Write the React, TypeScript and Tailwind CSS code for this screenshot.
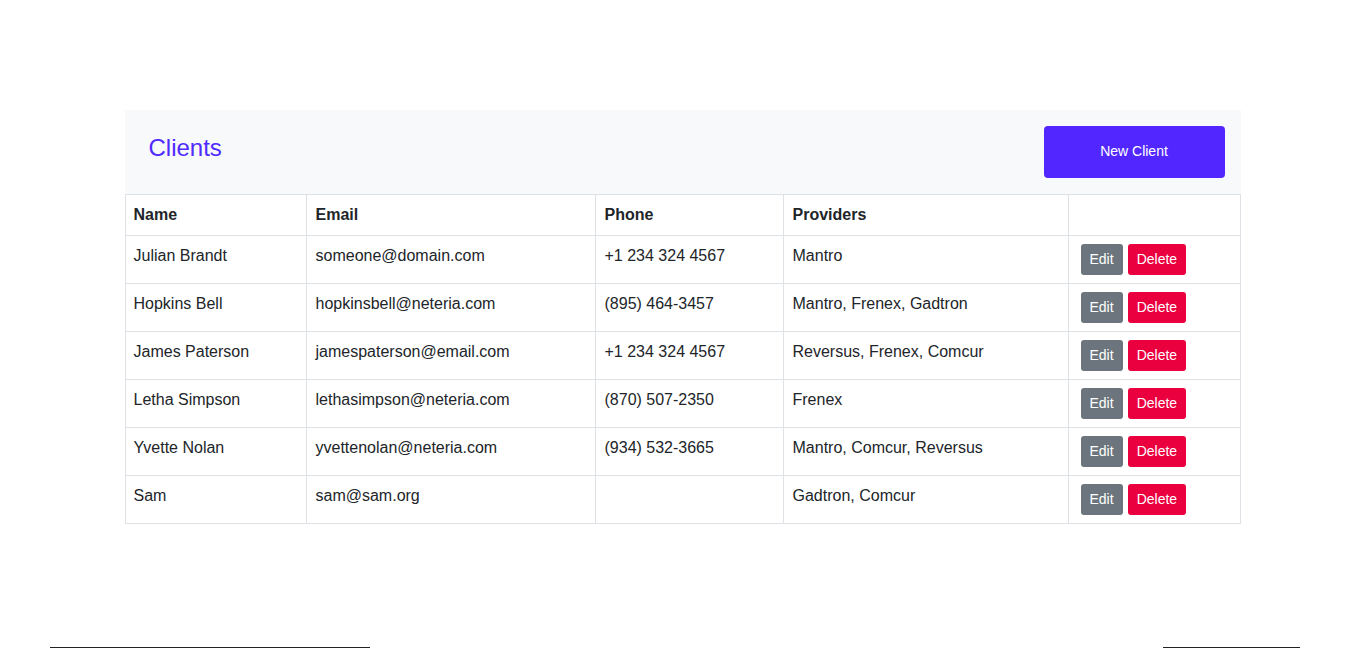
import React from "react";

type Client = {
  name: string;
  email: string;
  phone: string;
  providers: string;
};

const clients: Client[] = [
  { name: "Julian Brandt", email: "someone@domain.com", phone: "+1 234 324 4567", providers: "Mantro" },
  { name: "Hopkins Bell", email: "hopkinsbell@neteria.com", phone: "(895) 464-3457", providers: "Mantro, Frenex, Gadtron" },
  { name: "James Paterson", email: "jamespaterson@email.com", phone: "+1 234 324 4567", providers: "Reversus, Frenex, Comcur" },
  { name: "Letha Simpson", email: "lethasimpson@neteria.com", phone: "(870) 507-2350", providers: "Frenex" },
  { name: "Yvette Nolan", email: "yvettenolan@neteria.com", phone: "(934) 532-3665", providers: "Mantro, Comcur, Reversus" },
  { name: "Sam", email: "sam@sam.org", phone: "", providers: "Gadtron, Comcur" },
];

export default function App() {
  return (
    <div className="min-h-[648px] bg-white font-['Liberation_Sans',Arial,sans-serif] text-[#212529]">
      <div className="pt-[110px]">
        <div className="w-[1116px] mx-auto">
          {/* header */}
          <div className="bg-[#f8f9fa] flex items-start justify-between h-[84px] px-4 pt-4">
            <h3 className="text-[24px] leading-[29px] text-[#4f2bff] ml-2 mt-[7px]">Clients</h3>
            <button className="w-[181px] h-[52px] pb-[2px] bg-[#5227ff] text-white text-[14px] rounded-[4px]">
              New Client
            </button>
          </div>

          <table className="w-full table-fixed border-collapse text-[16px] leading-6">
            <thead>
              <tr>
                <th className="w-[181px] border border-[#dee2e6] px-2 py-2 text-left font-bold">Name</th>
                <th className="w-[289px] border border-[#dee2e6] pl-[9px] pr-2 py-2 text-left font-bold">Email</th>
                <th className="w-[188px] border border-[#dee2e6] pl-[9px] pr-2 py-2 text-left font-bold">Phone</th>
                <th className="w-[285px] border border-[#dee2e6] pl-[9px] pr-2 py-2 text-left font-bold">Providers</th>
                <th className="border border-[#dee2e6] px-2 py-2"></th>
              </tr>
            </thead>
            <tbody>
              {clients.map((c, i) => (
                <tr key={i}>
                  <td className="border border-[#dee2e6] px-2 py-2 align-top h-[48px]">{c.name}</td>
                  <td className="border border-[#dee2e6] pl-[9px] pr-2 py-2 align-top">{c.email}</td>
                  <td className="border border-[#dee2e6] pl-[9px] pr-2 py-2 align-top">{c.phone}</td>
                  <td className="border border-[#dee2e6] pl-[9px] pr-2 py-2 align-top">{c.providers}</td>
                  <td className="border border-[#dee2e6] pl-3 pr-2 py-2 align-top">
                    <div className="flex gap-[5px]">
                      <button className="h-[31px] px-2 pb-[1px] border border-transparent bg-[#6c757d] text-white text-[14px] rounded-[3px]">Edit</button>
                      <button className="h-[31px] px-2 pb-[1px] border border-transparent bg-[#eb003f] text-white text-[14px] rounded-[3px]">Delete</button>
                    </div>
                  </td>
                </tr>
              ))}
            </tbody>
          </table>
        </div>
      </div>

      {/* footer top edge, cut off by the window */}
      <div className="mt-[123px] flex justify-between pl-[50px] pr-[65px]">
        <div className="w-[320px] h-[1px] bg-[#222]"></div>
        <div className="w-[137px] h-[1px] bg-[#222]"></div>
      </div>
    </div>
  );
}
